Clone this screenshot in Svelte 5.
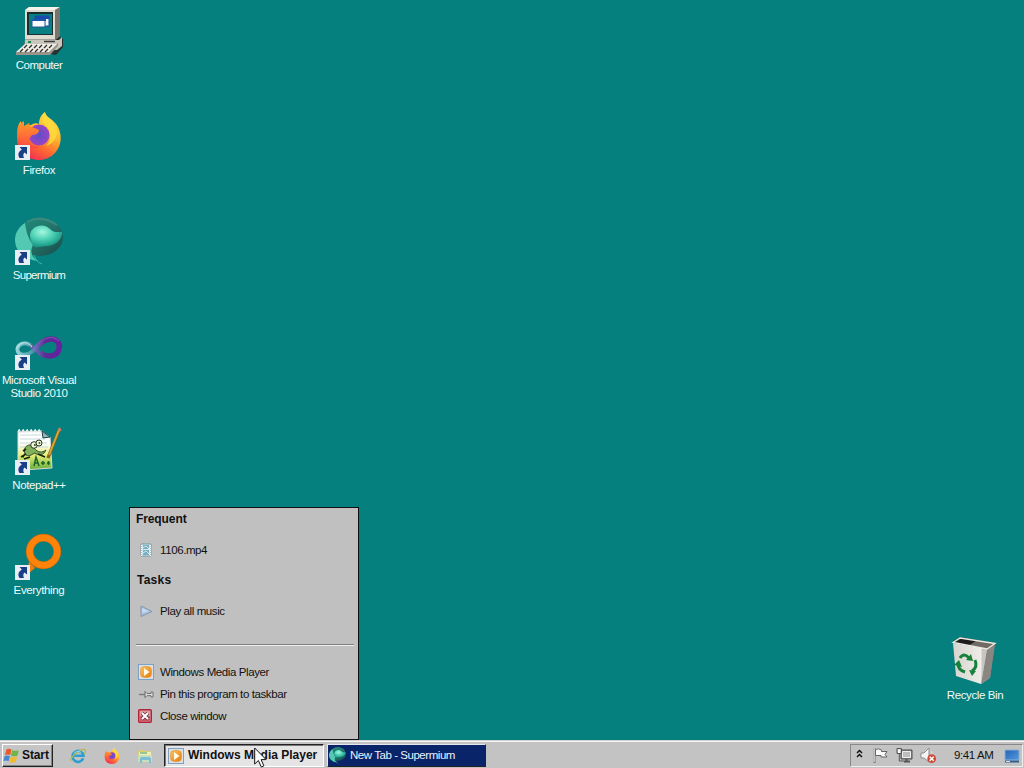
<script>
  const shortcuts = [
    { icon: 'computer', lines: ['Computer'], link: false, track: -0.5 },
    { icon: 'firefox', lines: ['Firefox'], link: true, track: -0.4 },
    { icon: 'supermium', lines: ['Supermium'], link: true, track: -0.7 },
    { icon: 'studio', lines: ['Microsoft Visual', 'Studio 2010'], link: true, track: -0.42 },
    { icon: 'notepad', lines: ['Notepad++'], link: true, track: -0.4 },
    { icon: 'everything', lines: ['Everything'], link: true, track: -0.35 }
  ];
</script>

<svg class="defs" width="0" height="0" aria-hidden="true">
  <defs>
    <linearGradient id="fox" x1=".8" y1="0" x2=".3" y2="1">
      <stop offset="0" stop-color="#ffe94a" /><stop offset=".4" stop-color="#ffb62e" />
      <stop offset=".7" stop-color="#ff6a30" /><stop offset="1" stop-color="#f02a58" />
    </linearGradient>
    <linearGradient id="foxFace" x1="0" y1="0" x2="0" y2="1"><stop offset="0" stop-color="#ff9a28" /><stop offset="1" stop-color="#ff4a42" /></linearGradient>
    <radialGradient id="globe"><stop offset="0" stop-color="#5a50c8" /><stop offset="1" stop-color="#9a44c4" /></radialGradient>
    <linearGradient id="smDark" x1="0" y1="0" x2="1" y2="1">
      <stop offset="0" stop-color="#1c8f7c" /><stop offset=".5" stop-color="#24746b" /><stop offset="1" stop-color="#174a48" />
    </linearGradient>
    <linearGradient id="smLeft" x1="0" y1="0" x2="1" y2="1">
      <stop offset="0" stop-color="#58c8b4" /><stop offset="1" stop-color="#4ccab0" />
    </linearGradient>
    <radialGradient id="smBall" cx=".38" cy=".3" r=".7">
      <stop offset="0" stop-color="#a4f8e0" /><stop offset=".5" stop-color="#4cd0b4" /><stop offset="1" stop-color="#159482" />
    </radialGradient>
    <linearGradient id="vsA"><stop offset="0" stop-color="#8fd0d8" /><stop offset=".6" stop-color="#4c9eb0" /><stop offset="1" stop-color="#50509c" /></linearGradient>
    <linearGradient id="vsB"><stop offset="0" stop-color="#6878b8" /><stop offset=".45" stop-color="#5b2c94" /><stop offset="1" stop-color="#6820a0" /></linearGradient>
    <linearGradient id="paper" x1="0" y1="0" x2="0" y2="1">
      <stop offset=".3" stop-color="#fff" /><stop offset=".62" stop-color="#e8ee76" /><stop offset="1" stop-color="#62ac38" />
    </linearGradient>
    <linearGradient id="bin" x1="0" y1="0" x2="1" y2="0">
      <stop offset="0" stop-color="#d6d4ce" /><stop offset=".66" stop-color="#eeece8" /><stop offset=".72" stop-color="#b8b5b0" /><stop offset="1" stop-color="#777472" />
    </linearGradient>
    <linearGradient id="orange" x1="0" y1="0" x2="1" y2="1"><stop offset="0" stop-color="#ffc45c" /><stop offset="1" stop-color="#e87908" /></linearGradient>
    <linearGradient id="screen" x1="0" y1="0" x2="1" y2="1"><stop offset="0" stop-color="#2464b8" /><stop offset="1" stop-color="#5398e0" /></linearGradient>
  </defs>
</svg>

{#snippet supermium(size)}
  <svg width={size} height={size} viewBox="0 0 48 48">
    <ellipse cx="25" cy="20" rx="23" ry="19" fill="url(#smDark)" />
    <path d="M10 6C2 11-2 20 1 29c2 8 12 14 22 15-7-4-8-10-5-16-5-7-7-14-8-22Z" fill="url(#smLeft)" />
    <path d="M15 18c1-9 13-13 20-6 3 4 8 3 12 3 1 7-7 14-15 14-7 0-13 4-15-2-1-3-2-6-2-9Z" fill="url(#smBall)" />
    <path d="M12 5Q26-3 42 8" fill="none" stroke="#3f8880" stroke-width="2" />
    <path d="M19 38q2 7 8 9" fill="none" stroke="#35bba0" stroke-width="1" />
  </svg>
{/snippet}

{#snippet firefox(size)}
  <svg width={size} height={size} viewBox="0 0 48 48">
    <path d="M24 12c0-6 3-10 6-12 1 6 9 7 13 15 8 16-3 33-19 33C10 48 1 38 2 23c0-6 1-11 4-14l1 6 5-2 4 0c3-2 6-2 8-1Z" fill="url(#fox)" />
    <circle cx="24" cy="23" r="10.5" fill="url(#globe)" />
    <path d="M3 15C5 12 7 10 9 9l0 5 5-3 1 4c4 0 6 2 9 3 0 4-4 5-7 5l-3 4c0 5 5 8 10 7-5 5-13 2-16-3-3-5-4-8-5-13Z" fill="url(#foxFace)" />
    <path d="M30 1c-3 4-3 9 2 14 5 6 4 14-1 19 9-3 13-11 10-19-3-6-9-8-11-14Z" fill="#ffdc3c" opacity=".8" />
  </svg>
{/snippet}

{#snippet player()}
  <svg width="16" height="16" viewBox="0 0 16 16">
    <rect x=".5" y=".5" width="15" height="15" fill="#d8e2ea" stroke="#7f9fc5" />
    <rect x="2" y="2" width="12" height="12" fill="#eadbc2" />
    <rect x="2.5" y="2.5" width="11" height="11" rx="4" fill="url(#orange)" stroke="#d9933b" stroke-width=".6" />
    <path d="M6 4v8L11.5 8Z" fill="#fffbe8" />
  </svg>
{/snippet}

{#snippet big(name)}
  {#if name === 'computer'}
    <svg width="48" height="48" viewBox="0 0 48 48">
      <path d="M11 31 42 27l6 5v8l-7 8L8 42Z" fill="#26302f" />
      <path d="M10 3 14 0h31v29l-5 4H10Z" fill="#a5a198" />
      <path d="M10 3 14 0h31l-5 3Z" fill="#f5f3ec" />
      <path d="M40 3 45 0v29l-5 4Z" fill="#77746e" />
      <path d="M10 3h30v29H10Z" fill="#dedbd1" />
      <path d="M12 5h26v23H12Z" fill="#182e31" /><path d="M14 7h23v20H14Z" fill="#087f82" />
      <path d="M20 9h14v10H20Z" fill="#f4f8fc" stroke="#174c9f" /><path d="M20 9h14v3H20Z" fill="#174cae" />
      <path d="M17 13h13v7H17Z" fill="#f8fbff" stroke="#255898" /><path d="M17 12h14v2H17Z" fill="#1b58aa" />
      <path d="M10 33h34l3-3v9l-5 4H9Z" fill="#c8c5bb" /><path d="M29 34.5h11" stroke="#3d3e3c" stroke-width="1.5" /><path d="M13 35h3" stroke="#158c50" stroke-width="2" />
      <path d="M10 37h33L34 47H1v-2Z" fill="#efede6" />
      <path d="M1 45h33l9-9v3l-8 9H1Z" fill="#99958d" />
      <path d="m12 38-3 3m8-3-3 3m8-3-3 3m8-3-3 3m8-3-3 3m8-3-3 3M8 42l-3 3m8-3-3 3m8-3-3 3m8-3-3 3m8-3-3 3m8-3-3 3" stroke="#34322e" stroke-width="1.4" />
    </svg>
  {:else if name === 'firefox'}
    {@render firefox(48)}
  {:else if name === 'supermium'}
    {@render supermium(48)}
  {:else if name === 'studio'}
    <svg width="48" height="48" viewBox="0 0 48 48">
      <path d="M17 25C11 18 2 22 2.5 28c1 6 9 6 14 2l9-8" fill="none" stroke="url(#vsA)" stroke-width="4" />
      <path d="M14 24q4 0 8 5 5 5 13 5" fill="none" stroke="#6458a4" stroke-width="4" />
      <path d="M19 29c4-6 10-12 17-12 9 0 10 9 6 14-4 4-11 4-17 0" fill="none" stroke="url(#vsB)" stroke-width="5.5" />
      <path d="M1 27c4-8 11-8 16-2" fill="none" stroke="#a8dedd" stroke-width="1.3" />
      <path d="M23 22c8-8 16-8 21-3" fill="none" stroke="#8a54b4" stroke-width="1" />
    </svg>
  {:else if name === 'notepad'}
    <svg width="48" height="48" viewBox="0 0 48 48">
      <path d="m3 5 24-1 8 6 2 31-30 2-4-4Z" fill="url(#paper)" stroke="#d7dcd8" />
      <path d="M5 8h21M5 12h25M5 16h27M5 20h28" stroke="#c6d8dc" stroke-width="1" />
      <path d="M3 5q2-5 2 1m2-1q2-5 2 1m2-1q2-5 2 1m2-1q2-5 2 1m2-1q2-5 2 1m2-1q2-5 2 1" fill="none" stroke="#e8efef" stroke-width="1.3" />
      <path d="m27 4 1 7 7-1Z" fill="#92b5c2" stroke="#204444" />
      <path d="M10 27c-2-5 1-9 5-9l4 3c4 5 8 5 12 2-2 5-7 6-11 3-3 1-5 4-9 2Z" fill="#82b05c" stroke="#304c28" />
      <circle cx="19" cy="18" r="3.3" fill="#edf5d5" stroke="#26351e" /><circle cx="24" cy="16" r="3" fill="#edf5d5" stroke="#26351e" />
      <path d="M19 18h1.7m3-2h1.5M6 30l5-3m-2 5 6-2m8-3 7 3M8 24l3-2m-4 7 2 1" stroke="#17220f" stroke-width="1.7" />
      <path d="m19 39 2-9 3 9m-4-3h3m3 0h4m-2-2v4m4-2h3m-1.5-2v4" fill="none" stroke="#1c6429" stroke-width="1.5" />
      <path d="M44 3 33 31" stroke="#7e621f" stroke-width="3.4" /><path d="M44 3 34 28" stroke="#dca53b" stroke-width="2" /><path d="m44 1 1.5 3" stroke="#db7860" stroke-width="2.5" />
    </svg>
  {:else if name === 'everything'}
    <svg width="48" height="48" viewBox="0 0 48 48">
      <path d="M14 29 20 36 12 43Z" fill="#f07d0a" />
      <circle cx="28.5" cy="19.5" r="13.8" fill="none" stroke="#b8691a" stroke-width="7.8" />
      <circle cx="28.5" cy="19.5" r="13.8" fill="none" stroke="#ff8308" stroke-width="6.4" />
    </svg>
  {:else}
    <svg width="48" height="48" viewBox="0 0 48 48">
      <path d="M2 5 9 0l36 6-9 6Z" fill="#504d49" /><path d="m5 5 6-4 14 3-7 4Z" fill="#1d1c1c" />
      <path d="m25 4 19 2-8 6-18-3Z" fill="#726b65" />
      <path d="m2 6 34 6 8-6-5 35-9 6-25-8Z" fill="url(#bin)" />
      <path d="M36 12 44 7 39 41 30 47Z" fill="#8a8682" /><path d="m32 13-2 34 6-35Z" fill="#c9c6c2" />
      <path d="M2 5.5 9 1l35 5.5-8 5.5Z" fill="none" stroke="#edeae3" stroke-width="1.3" />
      <g fill="none" stroke="#17813b" stroke-width="3"><path d="M9 21q4-6 9 0M24 23q3 7-3 11M14 35q-7-2-7-8" /></g>
      <path d="m20 17 2 7-7-1Zm5 17-7-1 3 6ZM3 28l5-5 3 7Z" fill="#17813b" />
    </svg>
  {/if}
{/snippet}

<main class="desktop">
  <section class="workspace">
    <div class="shortcuts">
      {#each shortcuts as s}
        <div class="shortcut">
          <div class="picture">
            {@render big(s.icon)}
            {#if s.link}
              <svg class="arrow" width="15" height="15" viewBox="0 0 15 15">
                <path d="M0 0h15v15H0Z" fill="#e8eef4" />
                <path d="M4.5 2H12v7.5L9.6 7.4C8.2 8.6 7.8 10.4 9 13H4.5C2.4 9.6 3.4 7 6.8 4.6Z" fill="#193f86" />
              </svg>
            {/if}
          </div>
          <div class="label" style="letter-spacing: {s.track}px">
            {#each s.lines as line}<div>{line}</div>{/each}
          </div>
        </div>
      {/each}
    </div>
    <div class="shortcut recycle">
      <div class="picture">{@render big('bin')}</div>
      <div class="label">Recycle Bin</div>
    </div>
  </section>

  <footer class="taskbar">
    <button class="start">
      <svg width="17" height="16" viewBox="0 0 17 16">
        <path d="M3.5 1.3q2.8-1.2 5 .2L7.3 7Q4.5 5.8 2 7Z" fill="#e75b2d" />
        <path d="M9.2 2.2q3.2 1.2 6.6 0L14.4 7.7q-3 1.2-6.4 0Z" fill="#72b545" />
        <path d="M1.7 8q2.6-1.2 5.2 0l-1.3 5.2q-2.6-1.2-5.2 0Z" fill="#4388cf" />
        <path d="M7.8 8.6q3 1.3 6.3.1l-1.3 5.2q-3 1.3-6.3 0Z" fill="#f2b92d" />
      </svg>
      <span>Start</span>
    </button>
    <div class="quick">
      <svg width="16" height="16" viewBox="0 0 16 16">
        <path d="M13.2 10.3A5.5 5.5 0 1 1 13.5 7.8H4" fill="none" stroke="#2e9ed2" stroke-width="2.6" />
        <path d="M1 13C-1 10 12-1 15 2c1 1 0 3-1 4" fill="none" stroke="#b4b84d" stroke-width="1.2" />
        <path d="M4 5.5q3-4 7-1" fill="none" stroke="#91daf0" stroke-width="1" />
      </svg>
      {@render firefox(16)}
      <svg width="16" height="16" viewBox="0 0 16 16">
        <path d="M1 2h5l1 1h7v10H1Z" fill="#d9cd75" /><path d="M2 4h12v7H2Z" fill="#f2efaf" />
        <path d="M3 4h7v2H3Z" fill="#94c69a" /><path d="M1 7h14v7H1Z" fill="#c8dfba" />
        <path d="M3 15v-4q0-2 2-2h7q2 0 2 2v4h-2v-3H5v3Z" fill="#7bbfd7" />
      </svg>
    </div>
    <div class="tasks">
      <button class="task pressed">{@render player()}<span>Windows Media Player</span></button>
      <button class="task flashing">{@render supermium(17)}<span>New Tab - Supermium</span></button>
    </div>
    <div class="tray">
      <svg class="chevron" width="7" height="10" viewBox="0 0 7 10"><path d="m1 4 2.5-2.5L6 4M1 8l2.5-2.5L6 8" fill="none" stroke="#111" stroke-width="1.5" /></svg>
      <svg class="flag" width="17" height="17" viewBox="0 0 17 17"><path d="M2.5 1v15" stroke="#777" stroke-width="2" /><path d="M3.5 2.5q3-1.5 6 .5v1.5h5.5l-2 3 2 2.5h-6V8.5H3.5Z" fill="#fafafa" stroke="#656565" /><path d="M2.2 1v14" stroke="#fff" stroke-width=".8" /></svg>
      <svg class="net" width="17" height="17" viewBox="0 0 17 17"><path d="M5 3h11v9H5Z" fill="#8b8b8b" stroke="#515151" /><path d="M6.5 4.5h8v6h-8Z" fill="#bebebe" stroke="#eee" /><path d="M8 14.5h6M10.5 12v3" stroke="#555" stroke-width="2" /><path d="M1 1.5h4.5v5H1Zm2.3 5v7.5H8" fill="none" stroke="#555" /><path d="M2 2.5h2.5V6H2Z" fill="#fff" /></svg>
      <svg class="sound" width="17" height="17" viewBox="0 0 17 17"><path d="M1 6h3l5-5v14l-5-4H1Z" fill="#f5f5f5" stroke="#8d8d8d" /><path d="M11 4q2 2 0 5" fill="none" stroke="#ddd" /><circle cx="11.7" cy="11.7" r="4.4" fill="#cf4b38" /><path d="m9.7 9.7 4 4m0-4-4 4" stroke="#fff" stroke-width="1.5" /></svg>
      <time>9:41 AM</time>
      <svg class="show" width="16" height="14" viewBox="0 0 16 14"><path d="M1 1h14v10H1Z" fill="url(#screen)" stroke="#8aadcc" /><path d="M1 11.5h14v2H1Z" fill="#315d91" /><path d="M2 12.5h4" stroke="#c8e2f3" /></svg>
    </div>
  </footer>

  <aside class="jump">
    <h2>Frequent</h2>
    <div class="entry file">
      <svg width="16" height="16" viewBox="0 0 16 16"><path d="M3 2h10v12H3Z" fill="#d7e9ee" stroke="#7699a7" /><path d="M5 3h6v4H5Zm0 5h6v5H5Z" fill="#79afc0" /><path d="M5 5.5 8 4l3 3M5 11l3-2 3 3" stroke="#d0e8e2" fill="none" /><path d="M3.5 3v11M12.5 3v11" stroke="#fff" stroke-dasharray="1 1" /></svg>
      <span>1106.mp4</span>
    </div>
    <h2 class="wide">Tasks</h2>
    <div class="entry play">
      <svg width="16" height="16" viewBox="0 0 16 16"><path d="M3 3v10.5L14 8.5Z" fill="#a9c3df" stroke="#7e96b4" /><path d="M4 5v5l7-2Z" fill="#c7d9ea" /></svg>
      <span>Play all music</span>
    </div>
    <hr />
    <div class="entry">{@render player()}<span>Windows Media Player</span></div>
    <div class="entry">
      <svg width="16" height="16" viewBox="0 0 16 16"><path d="M1 8.5h6" stroke="#777" stroke-width="1.4" /><path d="M7 5v7M7 6.5h1l1 1h4V6h2v5h-2V9.7H9l-1 1H7" fill="#ddd" stroke="#707070" /></svg>
      <span>Pin this program to taskbar</span>
    </div>
    <div class="entry close">
      <svg width="16" height="16" viewBox="0 0 16 16"><rect x="1.7" y="1.7" width="12.6" height="12.6" rx="1" fill="#dd9ca1" stroke="#b32338" stroke-width="1.4" /><path d="M3 8h10v5H3Z" fill="#c8576a" /><path d="m5 5 6 6m0-6-6 6" stroke="#71303a" stroke-width="3.6" /><path d="m5 5 6 6m0-6-6 6" stroke="#fff" stroke-width="2" /></svg>
      <span>Close window</span>
    </div>
  </aside>

  <svg class="cursor" width="13" height="22" viewBox="0 0 13 22"><path d="M.7 1v16l3.7-3.5L7.3 20l2.6-1.2-2.8-6.2h5Z" fill="#fff" stroke="#111" /></svg>
</main>

<style>
  :global(body) { margin: 0; overflow: hidden; }
  .defs { position: absolute; }
  .desktop {
    position: relative;
    display: flex;
    flex-direction: column;
    width: 1024px;
    height: 768px;
    overflow: hidden;
    background: #05807e;
    color: #111;
    font: 11.5px/13px "Liberation Sans", Arial, sans-serif;
    letter-spacing: -0.4px;
    cursor: default;
  }
  svg { display: block; flex: none; }
  .workspace { flex: 1; display: flex; justify-content: space-between; align-items: flex-end; min-height: 0; }
  .shortcuts { align-self: flex-start; }
  .shortcut { width: 78px; height: 98px; padding-top: 7px; color: #effaf9; text-align: center; white-space: nowrap; }
  .picture { position: relative; width: 48px; height: 48px; margin: 0 auto 4px; }
  .arrow { position: absolute; left: 0; bottom: 0; }
  .recycle { width: 80px; height: 103px; padding: 0; margin-right: 9px; }
  .taskbar {
    display: flex;
    align-items: flex-start;
    box-sizing: border-box;
    height: 28px;
    padding: 3px 1px 0 2px;
    background: #c3c3c3;
    border-top: 1px solid #d4d4d4;
    box-shadow: inset 0 1px #f5f5f5;
  }
  button { font: inherit; color: inherit; letter-spacing: inherit; margin: 0; box-sizing: border-box; }
  .start {
    display: flex; align-items: center; gap: 2px; width: 51px; height: 23px; padding: 0;
    background: #c5c5c5; border: 1px solid; border-color: #fff #222 #222 #fff;
    box-shadow: inset -1px -1px #858585; font-weight: 700; font-size: 12px; letter-spacing: -.1px;
  }
  .quick { display: flex; gap: 17.5px; padding: 4px 0 0 17px; width: 94px; height: 18px; }
  .tasks { display: flex; gap: 3px; }
  .task { display: flex; align-items: center; gap: 4px; width: 160px; height: 23px; padding: 0 3px; white-space: nowrap; }
  .pressed {
    border: 1px solid; border-color: #222 #fff #fff #222; box-shadow: inset 1px 1px #777;
    background: #e5e5e5; font-weight: 700; font-size: 12px; letter-spacing: 0;
  }
  .flashing { width: 159px; background: #0a246a; border: 1px solid; border-color: #e6e8ef #222 #222 #e6e8ef; color: #edf2fb; padding-left: 1px; letter-spacing: -.45px; }
  .tray {
    display: flex; align-items: center; box-sizing: border-box; width: 173px; height: 23px; margin-left: auto; padding-left: 5px;
    border: 1px solid; border-color: #888 #eee #eee #888;
  }
  .chevron { margin-bottom: 3px; }
  .flag { margin-left: 9px; }
  .net { margin-left: 7px; }
  .sound { margin-left: 7px; }
  .tray time { width: 42px; margin-left: 17px; letter-spacing: -.4px; white-space: nowrap; }
  .show { margin-left: 8px; }
  .jump {
    position: absolute; left: 129px; top: 507px; width: 230px; height: 233px; box-sizing: border-box;
    padding: 5px 4px 0 6px; background: #c0c0c0; border: 1px solid #111;
  }
  .jump h2 { margin: 0; font-size: 12px; line-height: 13px; letter-spacing: -.1px; }
  .jump .wide { letter-spacing: .25px; padding-left: 1px; }
  .entry { display: flex; align-items: center; gap: 6px; height: 22px; padding-left: 2px; white-space: nowrap; }
  .file { margin: 13px 0 13px; }
  .play { margin: 13px 0 22px; }
  .close { padding-left: 1px; gap: 7px; }
  .jump hr { height: 1px; border: 0; margin: 0 0 16px; background: #808080; box-shadow: 0 1px #eee; }
  .cursor { position: absolute; left: 254px; top: 747px; }
</style>
